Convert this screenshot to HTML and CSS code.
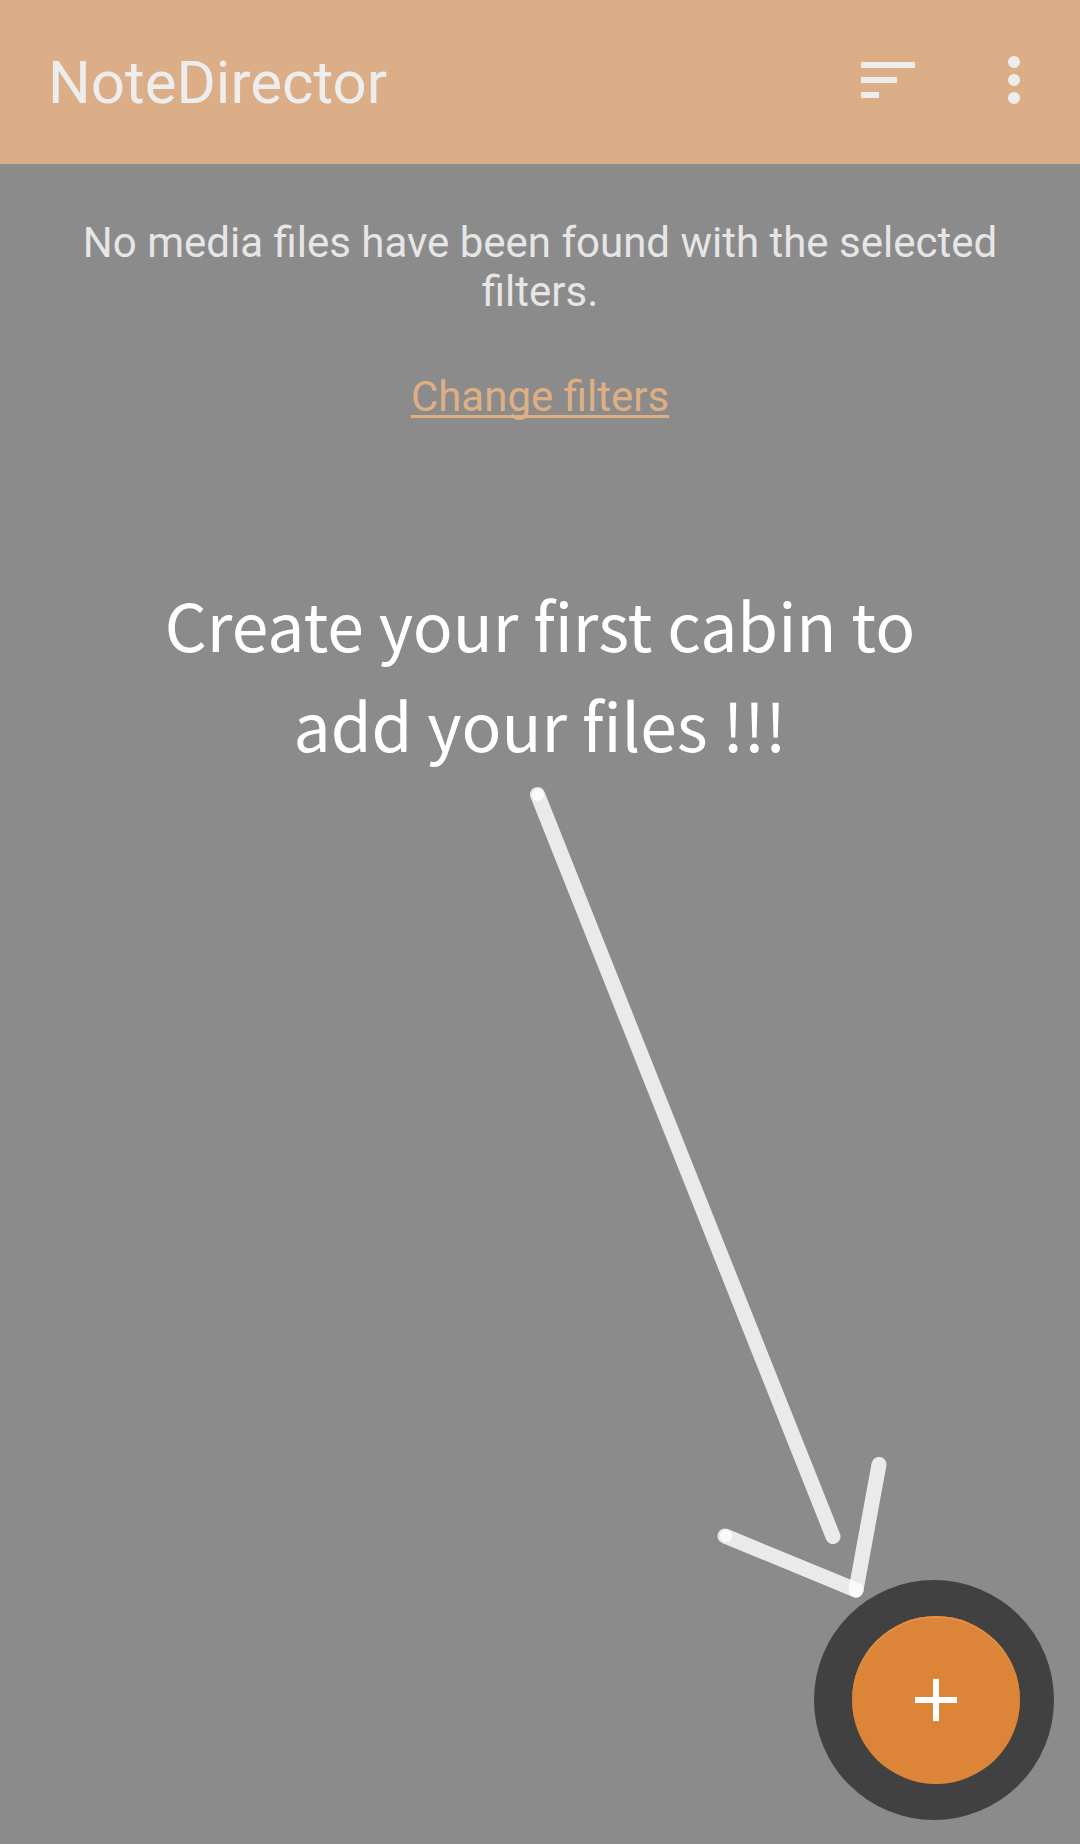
FILE: index.html
```html
<!DOCTYPE html>
<html lang="en">
<head>
<meta charset="utf-8">
<meta name="viewport" content="width=device-width, initial-scale=1">
<title>NoteDirector</title>
<link rel="stylesheet" href="styles.css">
</head>
<body>
<div class="app">
  <header class="toolbar">
    <h1 class="toolbar-title">NoteDirector</h1>
    <button class="icon-button" type="button" aria-label="Sort">
      <svg width="72" height="72" viewBox="0 0 72 72" aria-hidden="true"><path d="M9 18h54v6H9zM9 33h36v6H9zM9 48h18v6H9z"/></svg>
    </button>
    <button class="icon-button" type="button" aria-label="More options">
      <svg width="72" height="72" viewBox="0 0 72 72" aria-hidden="true"><circle cx="36" cy="18" r="6"/><circle cx="36" cy="36" r="6"/><circle cx="36" cy="54" r="6"/></svg>
    </button>
  </header>
  <main class="content">
    <p class="message">No media files have been found with the selected filters.</p>
    <a class="filters-link" href="#filters">Change filters</a>
    <h2 class="hint">Create your first cabin to<br>add your files !!!</h2>
  </main>
  <svg class="hint-arrow" width="362" height="815" viewBox="0 0 362 815" aria-hidden="true">
    <path class="stroke" d="M9.500 9.500L305 751.500"/>
    <path class="stroke" d="M197 751L328 805"/>
    <path class="stroke" d="M351 679.500L328 805"/>
    <circle class="dot" cx="10" cy="10" r="6"/>
    <circle class="dot" cx="198" cy="751" r="6"/>
  </svg>
  <div class="fab-ring">
    <button class="fab" type="button" aria-label="Create cabin">
      <svg width="72" height="72" viewBox="0 0 72 72" aria-hidden="true"><path d="M33 15h6v18h18v6H39v18h-6V39H15v-6h18z"/></svg>
    </button>
  </div>
</div>
</body>
</html>
```
FILE: styles.css
```css
* {
  box-sizing: border-box;
}

body {
  margin: 0;
  background: #8b8b8b;
  font-family: Roboto, "Liberation Sans", sans-serif;
}

.app {
  position: relative;
  display: flex;
  flex-direction: column;
  min-height: 100vh;
}

.toolbar {
  display: flex;
  align-items: center;
  gap: 54px;
  padding: 42px 30px 46px 48px;
  background: #dbae87;
  color: #ededed;
}

.toolbar-title {
  flex: 1;
  margin: 0;
  padding-top: 6px;
  font-size: 60px;
  line-height: 70px;
  font-weight: 400;
}

.icon-button {
  display: flex;
  padding: 0;
  border: 0;
  background: none;
  color: inherit;
}

svg {
  display: block;
  fill: currentColor;
}

.content {
  display: flex;
  flex: 1;
  flex-direction: column;
  align-items: center;
  padding: 54px 48px;
  text-align: center;
}

.message {
  margin: 0;
  color: #e6e6e6;
  font-size: 42px;
  line-height: 49px;
}

.filters-link {
  margin-top: 56px;
  color: #dfaf84;
  font-size: 42px;
  line-height: 49px;
  text-decoration-thickness: 3px;
  text-underline-offset: 4px;
  text-decoration-skip-ink: none;
}

.hint {
  margin: 152px 0 0;
  color: #fff;
  font-family: "Noto Sans CJK SC", "Open Sans", sans-serif;
  font-size: 66px;
  line-height: 100px;
  font-weight: 400;
}

.hint-arrow {
  position: absolute;
  right: 190px;
  bottom: 244px;
}

.stroke {
  fill: none;
  stroke: #fff;
  stroke-width: 15px;
  stroke-linecap: round;
  stroke-opacity: 0.82;
}

.dot {
  fill: #fff;
  fill-opacity: 0.82;
}

.fab-ring {
  position: absolute;
  right: 26px;
  bottom: 24px;
  padding: 36px 34px 36px 38px;
  border-radius: 50%;
  background: #414141;
}

.fab {
  display: flex;
  align-items: center;
  justify-content: center;
  width: 168px;
  height: 168px;
  padding: 0;
  border: 0;
  border-radius: 50%;
  background: #dc8539;
  color: #fff;
  box-shadow: inset 0 2px 1px #e29148;
}
```
